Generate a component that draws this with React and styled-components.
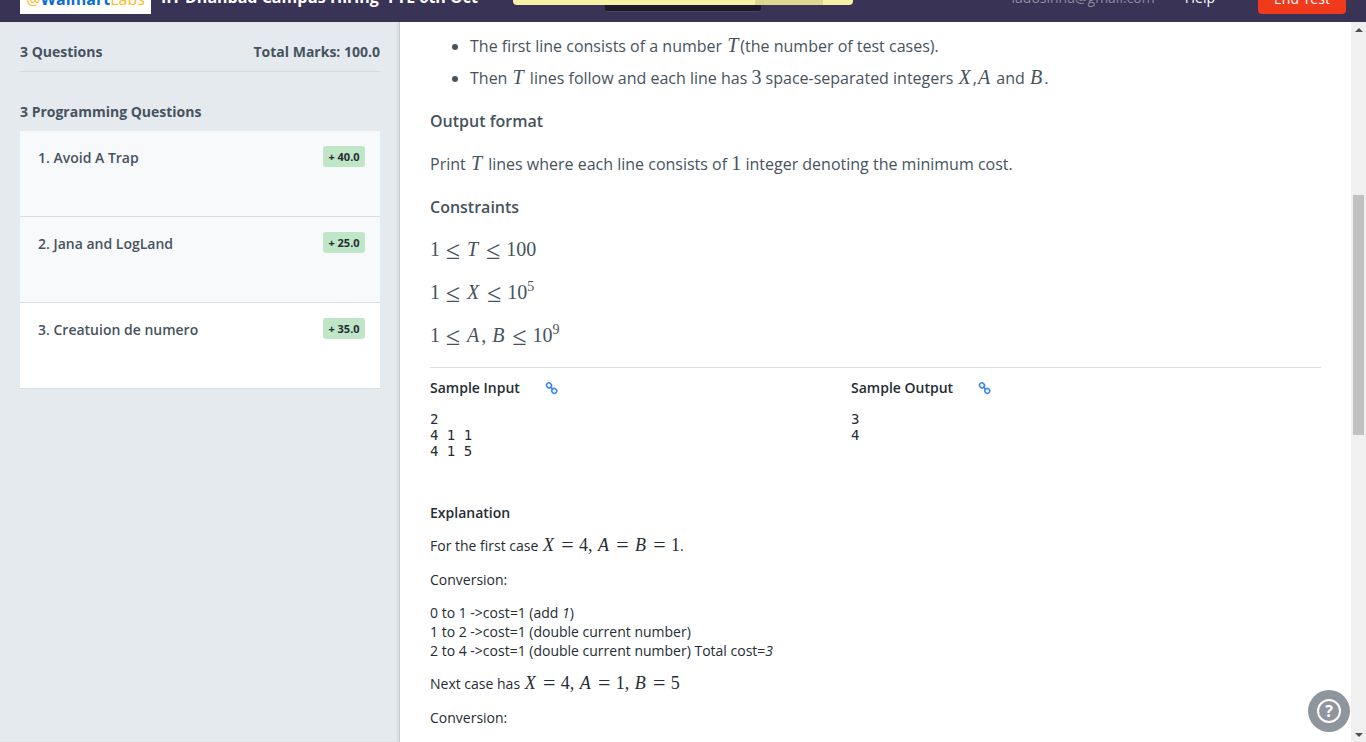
import React from "react";
import styled, { createGlobalStyle } from "styled-components";

const GlobalStyle = createGlobalStyle`
  * { box-sizing: border-box; }
  body {
    margin: 0;
    font-family: "Open Sans", "Noto Sans", sans-serif;
    font-size: 14px;
    color: #252c33;
    background: #fff;
  }
`;

const Shell = styled.div`
  display: flex;
  flex-direction: column;
  height: 100vh;
  overflow: hidden;
`;

const Header = styled.header`
  position: relative;
  display: flex;
  align-items: flex-end;
  flex: none;
  height: 22px;
  padding: 0 20px 8px;
  overflow: hidden;
  background: #393356;
  color: #fff;
`;

const Logo = styled.a`
  flex: none;
  width: 131px;
  height: 40px;
  padding-top: 13px;
  background: #fff;
  color: #0a6ed1;
  font-size: 16px;
  font-weight: 700;
  line-height: 24px;
  text-align: center;
  text-decoration: none;
  white-space: nowrap;
`;

const LogoAccent = styled.span`
  color: #fdbb1f;
  font-weight: 400;
`;

const TestName = styled.h1`
  flex: 1;
  margin: 0 0 0 10px;
  font-size: 16px;
  font-weight: 700;
  line-height: 34px;
  white-space: nowrap;
`;

const Timer = styled.div`
  position: absolute;
  left: 50%;
  bottom: 10px;
  width: 156px;
  height: 40px;
  margin-left: -78px;
  border-radius: 3px;
  border-bottom: 1px solid #4b4665;
  background: #1d1a2a;
`;

const Notice = styled.div`
  position: absolute;
  left: 50%;
  bottom: 17px;
  width: 340px;
  height: 30px;
  margin-left: -170px;
  padding-right: 30px;
  display: flex;
  justify-content: flex-end;
  overflow: hidden;
  border-radius: 4px;
  background: #f6f2a5;
`;

const NoticeAction = styled.span`
  width: 68px;
  background: #dad893;
`;

const Email = styled.span`
  margin-right: 30px;
  color: #8f8c9c;
  line-height: 32px;
`;

const HelpButton = styled.button`
  display: flex;
  align-items: center;
  gap: 7px;
  margin-right: 30px;
  padding: 0;
  border: 0;
  background: none;
  color: #fff;
  font: inherit;
  line-height: 32px;
`;

const Caret = styled.span`
  border: 3px solid transparent;
  border-top-color: #8f8c9c;
  border-bottom: 0;
`;

const EndButton = styled.button`
  width: 88px;
  height: 32px;
  padding: 0;
  border: 0;
  border-radius: 4px;
  background: #f1391c;
  color: #fff;
  font: inherit;
`;

const Main = styled.div`
  display: flex;
  flex: 1;
  min-height: 0;
`;

const Sidebar = styled.aside`
  flex: none;
  width: 400px;
  padding: 18px 19px 0 20px;
  border-right: 1px solid #c6cbcf;
  background: #e5eaee;
  box-shadow: inset -2px 0 2px #d9dee2;
  color: #46535e;
  font-weight: 600;
`;

const Totals = styled.div`
  display: flex;
  justify-content: space-between;
  padding: 2px 0 9px;
  border-bottom: 1px solid #d3d9dd;
  font-weight: 700;
  line-height: 20px;
`;

const SidebarTitle = styled.h2`
  margin: 30px 0 9px;
  font-size: 14px;
  font-weight: 700;
  line-height: 20px;
`;

const QuestionList = styled.nav`
  display: flex;
  flex-direction: column;
`;

const Question = styled.a`
  display: flex;
  justify-content: space-between;
  align-items: flex-start;
  height: 86px;
  padding: 15px 15px 0 18px;
  border-bottom: 1px solid #d9dde1;
  background: ${(p) => (p.$active ? "#fff" : "#f8f9fb")};
  color: inherit;
  line-height: 24px;
  text-decoration: none;
`;

const Marks = styled.span`
  width: 42px;
  border-radius: 3px;
  background: #bfe6c7;
  color: #252c33;
  font-size: 11px;
  font-weight: 700;
  line-height: 21px;
  text-align: center;
`;

const Content = styled.main`
  flex: 1;
  min-width: 0;
  overflow: hidden;
  padding: 10px 30px 0;
`;

const Statement = styled.section`
  color: #46535e;
  font-size: 16px;
  line-height: 28px;
`;

const Bullets = styled.ul`
  margin: 0;
  padding-left: 40px;
`;

const Bullet = styled.li`
  margin-bottom: ${(p) => (p.$last ? 0 : 4)}px;
`;

const StatementTitle = styled.h3`
  margin: 15px 0 0;
  font-size: 16px;
  font-weight: 600;
`;

const StatementText = styled.p`
  margin: 15px 0 0;
`;

const MathText = styled.span`
  font-family: "Liberation Serif", "Times New Roman", serif;
  font-size: ${(p) => (p.$small ? 18 : 20)}px;
  line-height: 1;
  white-space: nowrap;

  sup {
    font-size: 14px;
    line-height: 0;
  }
`;

const Variable = styled.var`
  padding: 0 2px 0 1px;
  font-style: italic;
`;

const Relation = styled.span`
  display: inline-block;
  width: ${(p) => (p.$wide ? 26 : 23)}px;
  font-size: ${(p) => (p.$wide ? 26 : 22)}px;
  line-height: 0;
  text-align: center;
  vertical-align: ${(p) => (p.$wide ? -3 : -1)}px;
`;

const Samples = styled.section`
  display: grid;
  grid-template-columns: 421fr 470fr;
  margin-top: 17px;
  padding-top: 10px;
  border-top: 1px solid #dfe0e1;
`;

const SampleTitle = styled.h3`
  display: flex;
  align-items: center;
  gap: 25px;
  margin: 0 0 13px;
  font-size: 14px;
  font-weight: 600;
  line-height: 20px;
`;

const SampleLink = styled.a`
  display: flex;
  color: #3f8ae8;
`;

const SampleData = styled.pre`
  margin: 0;
  font-family: "DejaVu Sans Mono", monospace;
  font-size: 14px;
  line-height: 16px;
`;

const Explanation = styled.section`
  display: flex;
  flex-direction: column;
  gap: 14px;
  margin-top: 44px;
  line-height: 19px;
`;

const ExplanationTitle = styled.h3`
  margin: 0;
  font-size: 14px;
  font-weight: 600;
  line-height: 19px;
`;

const Paragraph = styled.p`
  margin: 0;
  line-height: ${(p) => (p.$math ? 20 : 19)}px;
`;

const Scrollbar = styled.div`
  display: flex;
  flex-direction: column;
  align-items: center;
  flex: none;
  width: 15px;
  padding: 6px 0 5px;
  background: #f0f0f0;
`;

const Arrow = styled.span`
  border: 4px solid transparent;
  ${(p) =>
    p.$up
      ? "border-top: 0; border-bottom-color: #505050;"
      : "border-bottom: 0; border-top-color: #505050;"}
`;

const Track = styled.div`
  flex: 1;
  width: 11px;
  padding-top: 163px;
`;

const Thumb = styled.div`
  height: 240px;
  background: #c1c1c1;
`;

const HelpBubble = styled.button`
  position: fixed;
  right: 16px;
  bottom: 10px;
  width: 42px;
  height: 42px;
  padding: 0;
  border: 0;
  border-radius: 50%;
  background: #8e959d;
  color: #fff;
`;

const HelpRing = styled.span`
  display: block;
  width: 24px;
  height: 24px;
  margin: 0 auto;
  border: 2px solid #fff;
  border-radius: 50%;
  font: 700 16px/20px "Open Sans", sans-serif;
`;

const questions = [
  { title: "1. Avoid A Trap", marks: "+ 40.0" },
  { title: "2. Jana and LogLand", marks: "+ 25.0" },
  { title: "3. Creatuion de numero", marks: "+ 35.0", active: true },
];

const Le = () => <Relation $wide>≤</Relation>;
const Eq = () => <Relation>=</Relation>;
const V = ({ children }) => <Variable>{children}</Variable>;

function LinkIcon() {
  return (
    <svg width="13" height="13" viewBox="0 0 13 13" fill="none" stroke="currentColor" strokeWidth="1.6" aria-hidden="true">
      <rect x="1.4" y="1.1" width="5" height="4.6" rx="2.2" transform="rotate(40 4 3.5)" />
      <rect x="6.8" y="6.4" width="5" height="4.6" rx="2.2" transform="rotate(40 9 8.7)" />
      <path d="M5 4.6 L8 7.6" />
    </svg>
  );
}

function Sample({ title, data }) {
  return (
    <div>
      <SampleTitle>
        {title}
        <SampleLink href="#sample" aria-label={`Open ${title}`}>
          <LinkIcon />
        </SampleLink>
      </SampleTitle>
      <SampleData>{data}</SampleData>
    </div>
  );
}

export default function App() {
  return (
    <Shell>
      <GlobalStyle />
      <Header>
        <Logo href="#home">
          <LogoAccent>@</LogoAccent>Walmart<LogoAccent>Labs</LogoAccent>
        </Logo>
        <TestName>IIT Dhanbad Campus Hiring -FTE 6th Oct</TestName>
        <Timer />
        <Notice>
          <NoticeAction />
        </Notice>
        <Email>ladosinha@gmail.com</Email>
        <HelpButton type="button">
          Help <Caret />
        </HelpButton>
        <EndButton type="button">End Test</EndButton>
      </Header>
      <Main>
        <Sidebar>
          <Totals>
            <span>3 Questions</span>
            <span>Total Marks: 100.0</span>
          </Totals>
          <SidebarTitle>3 Programming Questions</SidebarTitle>
          <QuestionList>
            {questions.map((q) => (
              <Question key={q.title} href="#question" $active={q.active}>
                <span>{q.title}</span>
                <Marks>{q.marks}</Marks>
              </Question>
            ))}
          </QuestionList>
        </Sidebar>
        <Content>
          <Statement>
            <Bullets>
              <Bullet>
                The first line consists of a number <MathText><V>T</V></MathText>(the number of test cases).
              </Bullet>
              <Bullet $last>
                Then <MathText><V>T</V></MathText> lines follow and each line has <MathText>3</MathText> space-separated
                integers <MathText><V>X</V></MathText>,<MathText><V>A</V></MathText> and <MathText><V>B</V></MathText>.
              </Bullet>
            </Bullets>
            <StatementTitle>Output format</StatementTitle>
            <StatementText>
              Print <MathText><V>T</V></MathText> lines where each line consists of <MathText>1</MathText> integer
              denoting the minimum cost.
            </StatementText>
            <StatementTitle>Constraints</StatementTitle>
            <StatementText>
              <MathText>1<Le /><V>T</V><Le />100</MathText>
            </StatementText>
            <StatementText>
              <MathText>1<Le /><V>X</V><Le />10<sup>5</sup></MathText>
            </StatementText>
            <StatementText>
              <MathText>1<Le /><V>A</V>, <V>B</V><Le />10<sup>9</sup></MathText>
            </StatementText>
          </Statement>
          <Samples>
            <Sample title="Sample Input" data={"2\n4 1 1\n4 1 5"} />
            <Sample title="Sample Output" data={"3\n4"} />
          </Samples>
          <Explanation>
            <ExplanationTitle>Explanation</ExplanationTitle>
            <Paragraph $math>
              For the first case{" "}
              <MathText $small><V>X</V><Eq />4, <V>A</V><Eq /><V>B</V><Eq />1</MathText>.
            </Paragraph>
            <Paragraph>Conversion:</Paragraph>
            <Paragraph>
              0 to 1 -&gt;cost<i>=</i>1 (add <i>1</i>)<br />
              1 to 2 -&gt;cost=1 (double current number)<br />
              2 to 4 -&gt;cost=1 (double current number) Total cost=<i>3</i>
            </Paragraph>
            <Paragraph $math>
              Next case has{" "}
              <MathText $small><V>X</V><Eq />4, <V>A</V><Eq />1, <V>B</V><Eq />5</MathText>
            </Paragraph>
            <Paragraph>Conversion:</Paragraph>
          </Explanation>
        </Content>
        <Scrollbar aria-hidden="true">
          <Arrow $up />
          <Track>
            <Thumb />
          </Track>
          <Arrow />
        </Scrollbar>
      </Main>
      <HelpBubble type="button" aria-label="Help">
        <HelpRing>?</HelpRing>
      </HelpBubble>
    </Shell>
  );
}
